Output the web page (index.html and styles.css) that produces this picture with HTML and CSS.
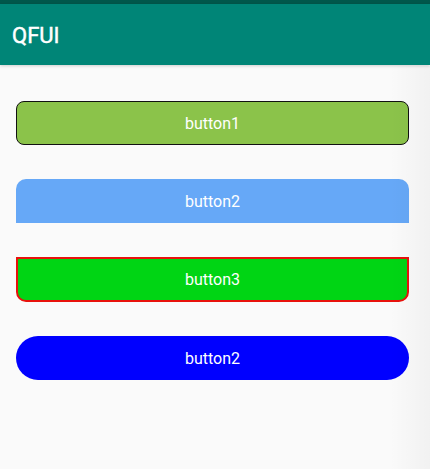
FILE: index.html
```html
<!DOCTYPE html>
<html>
<head>
<meta charset="utf-8">
<link rel="stylesheet" href="styles.css">
</head>
<body>
<div class="status"></div>
<header class="appbar"><span class="title">QFUI</span></header>
<main class="content">
  <div class="btn b1">button1</div>
  <div class="btn b2">button2</div>
  <div class="btn b3">button3</div>
  <div class="btn b4">button2</div>
</main>
<div class="edge"></div>
</body>
</html>
```
FILE: styles.css
```css
html, body {
  margin: 0;
  padding: 0;
  background: #fafafa;
  width: 430px;
  height: 469px;
  overflow: hidden;
  font-family: Roboto, "Noto Sans", sans-serif;
}
body { position: relative; }
.status {
  height: 4px;
  background: #00574b;
}
.appbar {
  height: 61px;
  background: #008577;
  display: flex;
  align-items: center;
  padding-left: 12px;
  box-shadow: 0 1px 3px rgba(0,0,0,0.18);
  position: relative;
  z-index: 1;
}
.title {
  color: #fff;
  font-size: 22px;
  font-weight: 400;
  -webkit-text-stroke: 0.45px #fff;
  padding-top: 2px;
}
.content {
  display: flex;
  flex-direction: column;
  padding: 36px 21px 0 16px;
  gap: 34px;
}
.btn {
  box-sizing: border-box;
  height: 44px;
  display: flex;
  align-items: center;
  justify-content: center;
  color: #fff;
  font-size: 16px;
}
.b1 {
  background: #8bc34a;
  border: 1px solid #111;
  border-radius: 8px;
}
.b2 {
  background: #66a8f7;
  border-radius: 10px 10px 0 0;
}
.b3 {
  background: #00d514;
  border: 2px solid #e8120c;
  border-radius: 0 0 10px 10px;
  height: 45px;
}
.b4 {
  background: #0000ff;
  border-radius: 22px;
}
.edge {
  position: absolute;
  top: 66px;
  right: 0;
  bottom: 0;
  width: 40px;
  background: linear-gradient(to right, rgba(0,0,0,0), rgba(0,0,0,0.035));
  pointer-events: none;
}
```
